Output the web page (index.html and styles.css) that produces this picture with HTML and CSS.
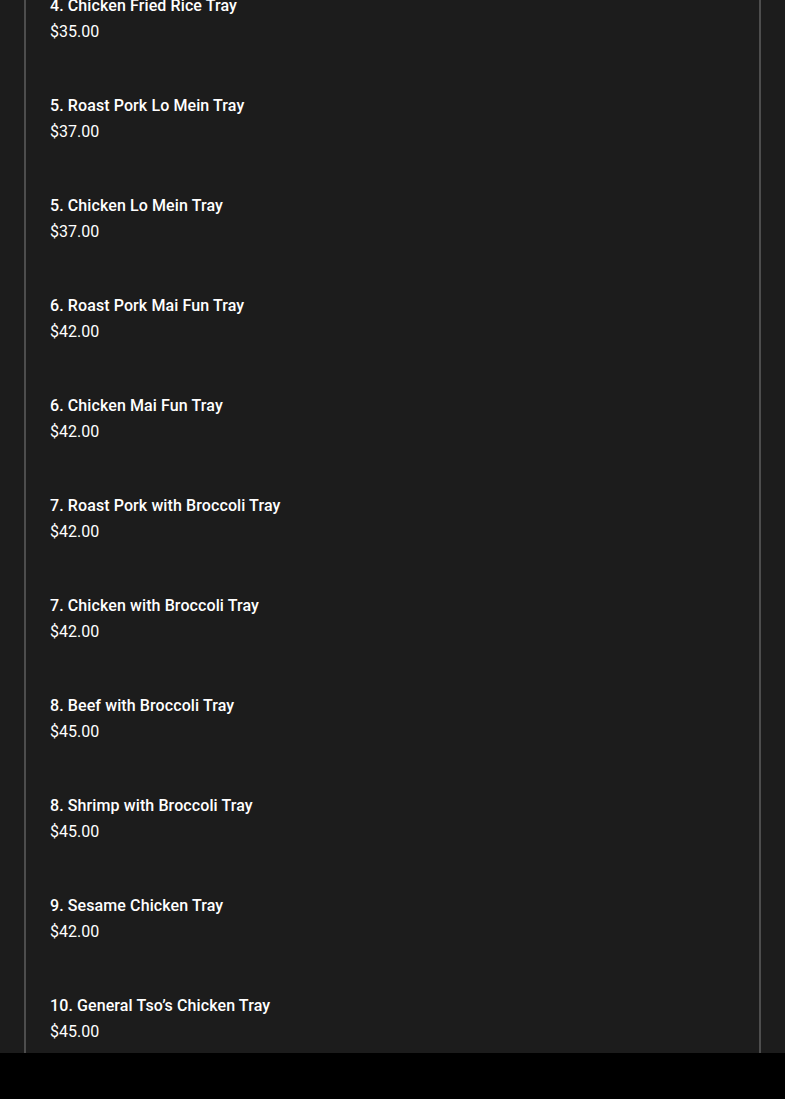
FILE: index.html
```html
<!DOCTYPE html>
<html>
<head>
<meta charset="utf-8">
<link rel="stylesheet" href="styles.css">
</head>
<body>
<div class="page">
  <div class="menu">
    <ul class="items">
      <li class="item"><div class="name">4. Chicken Fried Rice Tray</div><div class="price">$35.00</div></li>
      <li class="item"><div class="name">5. Roast Pork Lo Mein Tray</div><div class="price">$37.00</div></li>
      <li class="item"><div class="name">5. Chicken Lo Mein Tray</div><div class="price">$37.00</div></li>
      <li class="item"><div class="name">6. Roast Pork Mai Fun Tray</div><div class="price">$42.00</div></li>
      <li class="item"><div class="name">6. Chicken Mai Fun Tray</div><div class="price">$42.00</div></li>
      <li class="item"><div class="name">7. Roast Pork with Broccoli Tray</div><div class="price">$42.00</div></li>
      <li class="item"><div class="name">7. Chicken with Broccoli Tray</div><div class="price">$42.00</div></li>
      <li class="item"><div class="name">8. Beef with Broccoli Tray</div><div class="price">$45.00</div></li>
      <li class="item"><div class="name">8. Shrimp with Broccoli Tray</div><div class="price">$45.00</div></li>
      <li class="item"><div class="name">9. Sesame Chicken Tray</div><div class="price">$42.00</div></li>
      <li class="item"><div class="name">10. General Tso’s Chicken Tray</div><div class="price">$45.00</div></li>
    </ul>
  </div>
</div>
<div class="footer"></div>
</body>
</html>
```
FILE: styles.css
```css
html, body {
  margin: 0;
  padding: 0;
  background: #000;
}
body {
  font-family: Roboto, "Liberation Sans", sans-serif;
  color: #fff;
  overflow: hidden;
  height: 1099px;
}
.page {
  background: #1c1c1c;
  height: 1053px;
  overflow: hidden;
}
.menu {
  margin-left: 24px;
  width: 733px;
  height: 1053px;
  border-left: 2px solid #4d4d4d;
  border-right: 2px solid #4d4d4d;
  box-sizing: content-box;
  overflow: hidden;
}
.items {
  list-style: none;
  margin: -7px 0 0 0;
  padding: 0 24px;
  display: flex;
  flex-direction: column;
  gap: 48px;
}
.item {
  display: flex;
  flex-direction: column;
}
.name {
  font-size: 16px;
  line-height: 26px;
  font-weight: 500;
  letter-spacing: 0.1px;
}
.price {
  font-size: 16px;
  line-height: 26px;
  font-weight: 400;
}
```
